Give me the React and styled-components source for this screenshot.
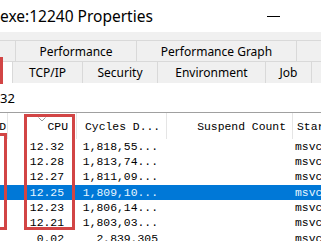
import React from "react";
import styled, { createGlobalStyle } from "styled-components";

const GlobalStyle = createGlobalStyle`
  html, body { margin: 0; padding: 0; background: #fff; }
  body {
    width: 321px;
    height: 241px;
    overflow: hidden;
    font-family: "Segoe UI", "Noto Sans", "Open Sans", sans-serif;
  }
`;

const Window = styled.div`
  position: relative;
  width: 321px;
  height: 241px;
  overflow: hidden;
  background: #fff;
`;

const TitleBar = styled.div`
  height: 32px;
  display: flex;
  align-items: center;
  justify-content: space-between;
  font-size: 15.5px;
  color: #000;
`;

const Minimize = styled.span`
  width: 13px;
  height: 1px;
  background: #000;
  margin-right: 41px;
`;

const TabStrip = styled.div`
  background: #f0f0f0;
  padding-top: 8px;
`;

const TabRow = styled.div`
  display: flex;
  height: ${p => p.$h}px;
  border-top: 1px solid #d9d9d9;
  box-sizing: border-box;
`;

const Tab = styled.div`
  flex: 0 0 ${p => p.$w}px;
  display: flex;
  align-items: center;
  justify-content: center;
  box-sizing: border-box;
  border-right: 1px solid #d9d9d9;
  font-size: 12px;
  color: #000;
  white-space: nowrap;
  background: ${p => (p.$active ? "#fff" : "#f0f0f0")};
`;

const InfoLine = styled.div`
  height: 29px;
  box-sizing: border-box;
  padding-top: 6px;
  font-size: 13px;
  color: #000;
`;

const List = styled.div`
  border-top: 1px solid #a0a0a0;
  font-family: "Liberation Mono", "DejaVu Sans Mono", monospace;
  font-size: 11.4px;
  color: #000;
`;

const Header = styled.div`
  display: flex;
  height: 26px;
`;

const HeadCell = styled.div`
  position: relative;
  flex: 0 0 ${p => p.$w}px;
  box-sizing: border-box;
  display: flex;
  align-items: center;
  justify-content: ${p => p.$align};
  padding: 2px ${p => p.$pr}px 0 ${p => p.$pl}px;
  border-right: 1px solid #e5e5e5;
  overflow: hidden;
  white-space: nowrap;
`;

const SortArrow = styled.svg`
  position: absolute;
  left: 30px;
  top: 4px;
`;

const Row = styled.div`
  display: flex;
  height: 15.33px;
  align-items: center;
  background: ${p => (p.$selected ? "#0078d7" : "transparent")};
  color: ${p => (p.$selected ? "#e6f6ff" : "#000")};
`;

const Cell = styled.div`
  flex: 0 0 ${p => p.$w}px;
  box-sizing: border-box;
  display: flex;
  justify-content: ${p => p.$align};
  padding: 0 ${p => p.$pr}px 0 ${p => p.$pl}px;
  overflow: hidden;
  white-space: nowrap;
`;

const Marker = styled.div`
  position: absolute;
  border: 3px solid #d24545;
  box-sizing: border-box;
  pointer-events: none;
`;

const cols = [
  { w: 8, head: "D", headAlign: "flex-end", align: "flex-end", hpr: 1, hpl: 0, pr: 1, pl: 0 },
  { w: 69, head: "CPU", headAlign: "flex-end", align: "flex-end", hpr: 8, hpl: 0, pr: 13, pl: 0 },
  { w: 90, head: "Cycles D...", headAlign: "flex-start", align: "flex-end", hpr: 0, hpl: 8, pr: 9, pl: 0 },
  { w: 126, head: "Suspend Count", headAlign: "flex-end", align: "flex-end", hpr: 6, hpl: 0, pr: 6, pl: 0 },
  { w: 60, head: "Start Address", headAlign: "flex-start", align: "flex-start", hpr: 0, hpl: 4, pr: 0, pl: 2 },
];

const rows = [
  ["", "12.32", "1,818,55...", "", "msvcrt.dll!_endthreadex"],
  ["", "12.28", "1,813,74...", "", "msvcrt.dll!_endthreadex"],
  ["", "12.27", "1,811,09...", "", "msvcrt.dll!_endthreadex"],
  ["", "12.25", "1,809,10...", "", "msvcrt.dll!_endthreadex"],
  ["", "12.23", "1,806,14...", "", "msvcrt.dll!_endthreadex"],
  ["", "12.21", "1,803,03...", "", "msvcrt.dll!_endthreadex"],
  ["", "0.02", "2,839,305", "", "msvcrt.dll!_endthreadex"],
];

const row1 = [
  { w: 16, label: "" },
  { w: 121, label: "Performance" },
  { w: 160, label: "Performance Graph" },
  { w: 40, label: "" },
];

const row2 = [
  { w: 13, label: "", active: true },
  { w: 70, label: "TCP/IP" },
  { w: 75, label: "Security" },
  { w: 108, label: "Environment" },
  { w: 46, label: "Job" },
  { w: 30, label: "" },
];

export default function App() {
  return (
    <Window>
      <GlobalStyle />
      <TitleBar>
        <span>exe:12240 Properties</span>
        <Minimize />
      </TitleBar>
      <TabStrip>
        <TabRow $h={21}>
          {row1.map((t, i) => (
            <Tab key={i} $w={t.w}>{t.label}</Tab>
          ))}
        </TabRow>
        <TabRow $h={22}>
          {row2.map((t, i) => (
            <Tab key={i} $w={t.w} $active={t.active}>{t.label}</Tab>
          ))}
        </TabRow>
      </TabStrip>
      <InfoLine>32</InfoLine>
      <List>
        <Header>
          {cols.map((c, i) => (
            <HeadCell key={i} $w={c.w} $align={c.headAlign} $pr={c.hpr} $pl={c.hpl}>
              {i === 1 && (
                <SortArrow width="8" height="5" viewBox="0 0 8 5">
                  <path d="M0.5 0.5 L4 4 L7.5 0.5" fill="none" stroke="#9a9a9a" strokeWidth="1" />
                </SortArrow>
              )}
              {c.head}
            </HeadCell>
          ))}
        </Header>
        {rows.map((r, ri) => (
          <Row key={ri} $selected={ri === 3}>
            {cols.map((c, ci) => (
              <Cell key={ci} $w={c.w} $align={c.align} $pr={c.pr} $pl={c.pl}>
                {r[ci]}
              </Cell>
            ))}
          </Row>
        ))}
      </List>
      <Marker style={{ left: -20, top: 57, width: 23, height: 27 }} />
      <Marker style={{ left: -20, top: 133, width: 27, height: 97 }} />
      <Marker style={{ left: 24, top: 114, width: 51, height: 116 }} />
    </Window>
  );
}
